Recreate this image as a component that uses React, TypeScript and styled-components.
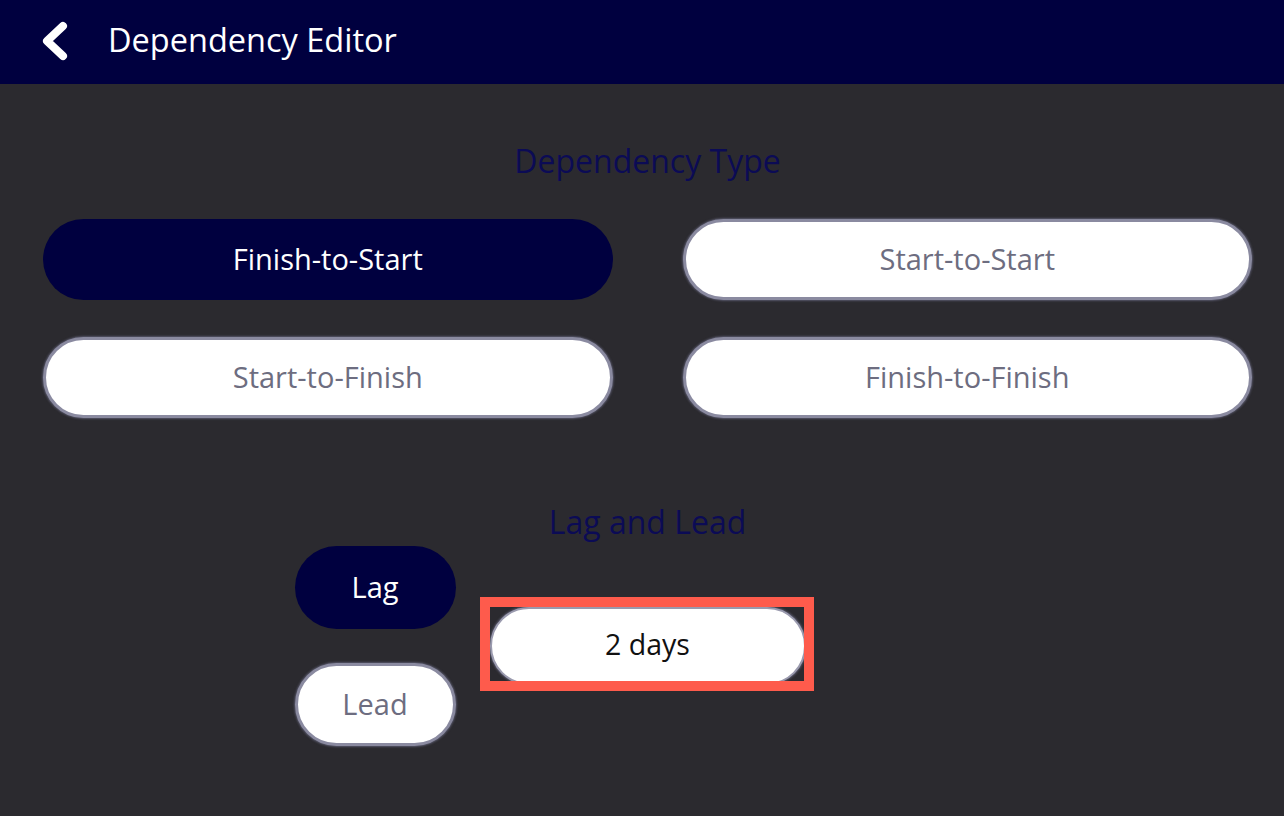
import React, { useState } from "react";
import styled, { createGlobalStyle } from "styled-components";

const Global = createGlobalStyle`
  html, body { margin: 0; padding: 0; background: #2b2a2f; }
  body { font-family: "Open Sans", "Noto Sans", sans-serif; }
  * { box-sizing: border-box; }
`;

const Page = styled.div`
  width: 1284px;
  height: 816px;
  background: #2b2a2f;
  display: flex;
  flex-direction: column;
  overflow: hidden;
`;

const Header = styled.header`
  height: 84px;
  background: #00003f;
  display: flex;
  align-items: center;
  padding-left: 38px;
  gap: 36px;
  flex-shrink: 0;
`;

const BackButton = styled.button`
  background: none;
  border: none;
  padding: 0;
  width: 34px;
  height: 40px;
  display: flex;
  align-items: center;
  justify-content: center;
  cursor: pointer;
  margin-top: -2px;
`;

const Title = styled.h1`
  margin: 0 0 4px;
  color: #ffffff;
  font-size: 32.5px;
  font-weight: 400;
  line-height: 1;
`;

const Main = styled.main`
  padding: 58px 32px 0 43px;
  display: flex;
  flex-direction: column;
`;

const SectionTitle = styled.h2<{ $gap: number }>`
  margin: 0 0 ${(p) => p.$gap}px;
  text-align: center;
  color: #0b0b55;
  font-size: 32px;
  font-weight: 400;
  line-height: 38px;
`;

const TypeGrid = styled.div`
  display: grid;
  grid-template-columns: 1fr 1fr;
  column-gap: 70px;
  row-gap: 37px;
  margin-bottom: 85px;
`;

const Pill = styled.button<{ $active: boolean; $width?: number; $height: number }>`
  width: ${(p) => (p.$width ? `${p.$width}px` : "100%")};
  height: ${(p) => p.$height}px;
  border-radius: 999px;
  font-family: "Open Sans", "Noto Sans", sans-serif;
  font-size: 29px;
  line-height: 1;
  cursor: pointer;
  display: flex;
  align-items: center;
  justify-content: center;
  padding: 0 0 3px;
  background: ${(p) => (p.$active ? "#00003f" : "#ffffff")};
  color: ${(p) => (p.$active ? "#ffffff" : "#6d6d80")};
  font-weight: ${(p) => (p.$active ? 500 : 400)};
  border: ${(p) => (p.$active ? "none" : "3px solid #8a8aa0")};
  box-shadow: ${(p) => (p.$active ? "none" : "0 0 2px 1px rgba(90,90,110,0.9)")};
`;

const LagRow = styled.div`
  display: grid;
  grid-template-columns: 1fr auto 1fr;
  align-items: center;
  margin-top: 5px;
`;

const ToggleColumn = styled.div`
  display: flex;
  flex-direction: column;
  gap: 34px;
  justify-self: end;
  margin-right: 34px;
`;

const InputWrap = styled.div`
  position: relative;
  width: 316px;
  height: 78px;
`;

const DaysInput = styled.input`
  width: 100%;
  height: 100%;
  border-radius: 999px;
  border: 2px solid #9a9aae;
  box-shadow: 0 0 2px 1px rgba(90,90,110,0.9);
  background: #ffffff;
  color: #111111;
  font-family: "Open Sans", "Noto Sans", sans-serif;
  font-size: 28.5px;
  text-align: center;
  outline: none;
  padding: 0 0 4px;
`;

const Highlight = styled.div`
  position: absolute;
  left: -10px;
  top: -10px;
  right: -8px;
  bottom: -6px;
  border: 10px solid #fe5b4c;
  pointer-events: none;
`;

const types = ["Finish-to-Start", "Start-to-Start", "Start-to-Finish", "Finish-to-Finish"];

export default function App() {
  const [type, setType] = useState("Finish-to-Start");
  const [mode, setMode] = useState<"Lag" | "Lead">("Lag");
  const [days, setDays] = useState("2 days");

  return (
    <Page>
      <Global />
      <Header>
        <BackButton aria-label="Back">
          <svg width="34" height="40" viewBox="0 0 34 40">
            <polyline
              points="25,5 9,20 25,35"
              fill="none"
              stroke="#ffffff"
              strokeWidth="8"
              strokeLinecap="round"
              strokeLinejoin="round"
            />
          </svg>
        </BackButton>
        <Title>Dependency Editor</Title>
      </Header>
      <Main>
        <SectionTitle $gap={39}>Dependency Type</SectionTitle>
        <TypeGrid>
          {types.map((t) => (
            <Pill key={t} $active={type === t} $height={81} onClick={() => setType(t)}>
              {t}
            </Pill>
          ))}
        </TypeGrid>
        <SectionTitle $gap={0}>Lag and Lead</SectionTitle>
        <LagRow>
          <ToggleColumn>
            <Pill $active={mode === "Lag"} $width={161} $height={83} onClick={() => setMode("Lag")}>
              Lag
            </Pill>
            <Pill $active={mode === "Lead"} $width={161} $height={83} onClick={() => setMode("Lead")}>
              Lead
            </Pill>
          </ToggleColumn>
          <InputWrap>
            <DaysInput value={days} onChange={(e) => setDays(e.target.value)} />
            <Highlight />
          </InputWrap>
          <div />
        </LagRow>
      </Main>
    </Page>
  );
}
